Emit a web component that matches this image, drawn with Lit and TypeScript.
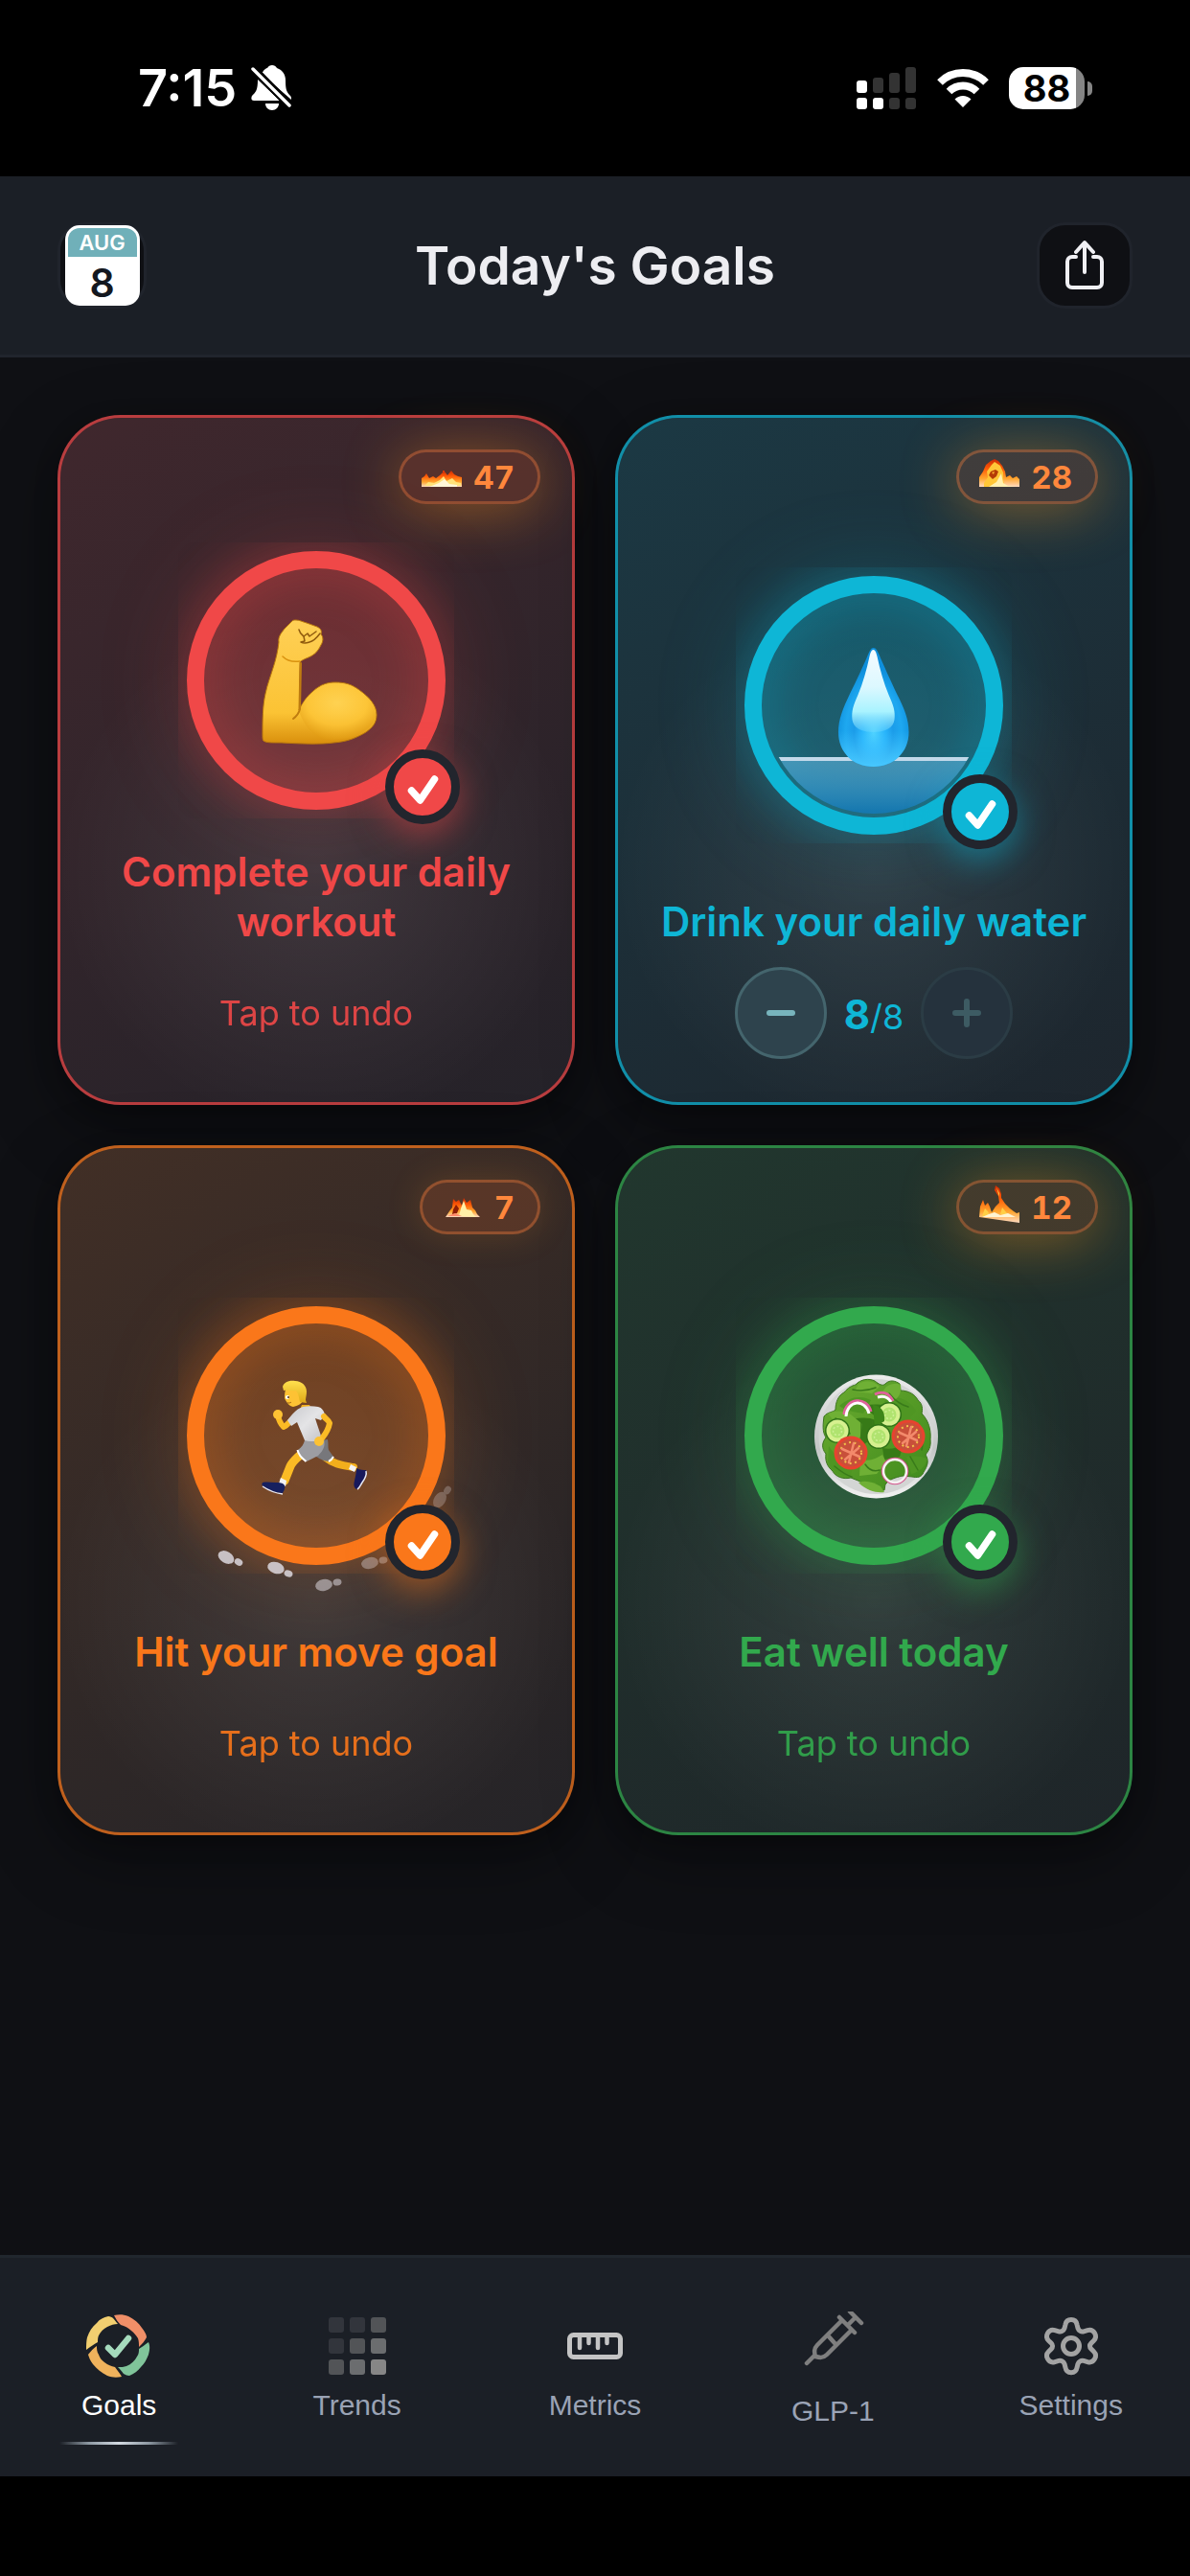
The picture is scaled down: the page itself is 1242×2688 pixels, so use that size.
import { LitElement, html, svg, css } from "lit";
import { customElement, property } from "lit/decorators.js";
import { classMap } from "lit/directives/class-map.js";

/* ---------- Artwork: every piece is drawn on the 288 x 288 ring square ---------- */

const armArt = svg`
  <defs>
    <linearGradient id="armSkin" x1="0" y1="0" x2="0" y2="1">
      <stop offset="0" stop-color="#ffd056"/><stop offset=".75" stop-color="#fbc334"/><stop offset="1" stop-color="#d98f0c"/>
    </linearGradient>
    <radialGradient id="armBicep" cx=".5" cy=".35" r=".65">
      <stop offset="0" stop-color="#ffd558"/><stop offset=".6" stop-color="#fdc537"/><stop offset="1" stop-color="#e09a12"/>
    </radialGradient>
  </defs>
  <path d="M123 81c4 0 7 2 11 3l11 4c4 2 5 4 4 8 3 3 2 8 0 11-3 6-6 10-13 13-5 2-7 3-9 5l-1 50c4-8 8-14 15-20 8-7 15-9 23-9 10 0 17 2 25 8 11 8 18 16 18 26 0 8-4 13-11 18-10 6-20 10-34 11-15 2-35 1-54 0-12 0-16 0-19-2-1-1-1-4-1-6 0-15 0-30 3-43 2-10 5-17 8-27 3-9 5-18 6-27-1-5 2-9 6-14l8-8c1-1 2-1 4-1z" fill="url(#armSkin)" stroke="#b9770d" stroke-width="1"/>
  <path d="M126 176c4-9 9-16 16-21 7-6 14-8 22-8 10 0 17 2 25 8 11 8 17 16 17 25 0 7-4 12-11 16-9 6-18 9-32 10-13 1-28-5-37-30z" fill="url(#armBicep)" opacity=".8"/>
  <path d="M128 126l-1 48c-1 4-3 7-7 10" fill="none" stroke="#c07d10" stroke-width="2" stroke-linecap="round"/>
  <path d="M126 91c1 4 3 5 5 7l4-3 2 3 7-5M131 98l1 5-4 1c4 2 6 1 9 0 5-1 8-5 11-9" fill="none" stroke="#8f5a0d" stroke-width="1.500" stroke-linecap="round" stroke-linejoin="round"/>
  <path d="M109 119c5 5 11 6 18 5" fill="none" stroke="#d9920f" stroke-width="1.500" stroke-linecap="round"/>
`;

const waterArt = svg`
  <defs>
    <clipPath id="waterBowl"><circle cx="144" cy="144" r="113"/></clipPath>
    <linearGradient id="waterFill" x1="0" y1="0" x2="0" y2="1">
      <stop offset="0" stop-color="#5fb4dc" stop-opacity=".6"/><stop offset=".85" stop-color="#1679b2" stop-opacity=".95"/>
    </linearGradient>
    <radialGradient id="dropBody" cx=".5" cy=".72" r=".55">
      <stop offset="0" stop-color="#4fd3ff"/><stop offset=".3" stop-color="#28b4fb"/><stop offset=".5" stop-color="#1b9ce9"/><stop offset=".72" stop-color="#1ea8f0"/><stop offset="1" stop-color="#0e8fdc"/>
    </radialGradient>
    <linearGradient id="dropShine" x1="0" y1="0" x2="0" y2="1">
      <stop offset="0" stop-color="#f4fbff"/><stop offset=".45" stop-color="#dcf8ff"/><stop offset=".75" stop-color="#a9f3ff"/><stop offset="1" stop-color="#8be4ff" stop-opacity=".25"/>
    </linearGradient>
    <linearGradient id="dropBase" x1="0" y1="0" x2="0" y2="1">
      <stop offset=".7" stop-color="#48c8ff" stop-opacity="0"/><stop offset="1" stop-color="#48c8ff"/>
    </linearGradient>
  </defs>
  <g clip-path="url(#waterBowl)">
    <rect x="24" y="198" width="240" height="66" fill="url(#waterFill)"/>
    <rect x="24" y="198" width="240" height="4" fill="#c3d9ea"/>
  </g>
  <path d="M143.500 84c3 0 4 3 6 7 5 12 12 27 19 42 7 14 12 25 12 39 0 21-16 36-37 36s-36.500-15-36.500-36c0-14 5-25 12-40 7-14 14-29 19-41 2-4 3-7 5.500-7z" fill="url(#dropBody)"/>
  <path d="M143.500 84c3 0 4 3 6 7 5 12 12 27 19 42 7 14 12 25 12 39 0 21-16 36-37 36s-36.500-15-36.500-36c0-14 5-25 12-40 7-14 14-29 19-41 2-4 3-7 5.500-7z" fill="url(#dropBase)"/>
  <path d="M143.500 86c2 0 3 3 4 7 3 14 7 28 12 40 5 11 7 17 6 26-1 8-9 13-22 13s-21-5-22-13c-1-9 1-15 6-26 5-12 9-26 12-40 1-4 2-7 4-7z" fill="url(#dropShine)"/>
`;

const prints = [
  { x: 50, y: 271, hx: 63, hy: 276, r: 30, o: 0.85 },
  { x: 102, y: 282, hx: 115, hy: 288, r: 18, o: 0.85 },
  { x: 152, y: 300, hx: 166, hy: 297, r: -10, o: 0.55 },
  { x: 200, y: 277, hx: 214, hy: 274, r: -12, o: 0.4 },
  { x: 273, y: 211, hx: 281, hy: 201, r: -58, o: 0.28 },
];

const runnerArt = svg`
  <defs>
    <linearGradient id="runShirt" x1="0" y1="0" x2="1" y2="1">
      <stop offset="0" stop-color="#c9c9cd"/><stop offset=".5" stop-color="#e4e4e6"/><stop offset="1" stop-color="#c2c2c6"/>
    </linearGradient>
    <linearGradient id="runHair" x1="0" y1="0" x2="0" y2="1">
      <stop offset="0" stop-color="#ffe04e"/><stop offset="1" stop-color="#e0a917"/>
    </linearGradient>
  </defs>
  ${prints.map(
    (p) => svg`<g fill="#dcd8de" opacity=${p.o}>
      <ellipse cx=${p.x} cy=${p.y} rx="9" ry="6" transform="rotate(${p.r} ${p.x} ${p.y})"/>
      <ellipse cx=${p.hx} cy=${p.hy} rx="4.500" ry="3.500" transform="rotate(${p.r} ${p.hx} ${p.hy})"/></g>`
  )}
  <path d="M154 167c8 7 18 8 29 10" fill="none" stroke="#f2ae1c" stroke-width="8" stroke-linecap="round"/>
  <path d="M180 174l6 3-2 5-6-3z" fill="#f3f3f5"/>
  <path d="M186 178c4 2 7 2 10 2 2 3 0 8-3 12-2 4-4 7-7 8-3-2-3-5-2-9 1-5 2-8 2-13z" fill="#17195c"/>
  <path d="M196 181c1 4-1 8-4 12-2 3-3 6-5 7" fill="none" stroke="#e8e8f2" stroke-width="1.500"/>
  <path d="M130 162c-6 5-11 9-13 14-2 5-4 10-6 15" fill="none" stroke="#fbbb25" stroke-width="9" stroke-linecap="round"/>
  <path d="M107 188l6 3-1 6-7-3z" fill="#f3f3f5"/>
  <path d="M88 193c5-1 9 0 14 0 4 0 7 0 9 3 1 3-1 6-2 8-7 0-14-3-19-6-3-2-3-3-2-5z" fill="#17205f"/>
  <path d="M88 197c6 4 13 7 21 8" fill="none" stroke="#e8e8f2" stroke-width="1.500"/>
  <path d="M144 150l12-2c1 5 0 8 1 11l5 7c-1 3-3 5-5 5-5 0-9-3-13-5z" fill="#77777b"/>
  <path d="M132 149l20-1c2 7-1 12-6 17l-12 6c-4-3-8-7-9-12 4-3 6-6 7-10z" fill="#9d9da2"/>
  <path d="M124.500 159c1 5 5 9 9 12M157 171c2-1 4-3 5-5" fill="none" stroke="#fff" stroke-width="2"/>
  <path d="M129 112h8l2 4-7 3-5-2z" fill="#f2ae1c"/>
  <path d="M118 128c-3 3-5 6-8 7-3-3-5-7-6-12" fill="none" stroke="#fbbb25" stroke-width="6" stroke-linecap="round" stroke-linejoin="round"/>
  <circle cx="104" cy="122" r="5" fill="#fdc234"/>
  <path d="M130 114c5-1 11-1 16 0 4 1 6 4 7 8l-4 6-6-2c2 7 5 14 7 22-5 2-12 3-18 1l-8-19-6 4-4-6c5-6 8-11 16-14z" fill="url(#runShirt)"/>
  <path d="M152 124c2 3 5 4 6 7-1 6-4 11-8 16" fill="none" stroke="#fbbb25" stroke-width="6" stroke-linecap="round" stroke-linejoin="round"/>
  <circle cx="147" cy="150" r="5" fill="#fdc234"/>
  <path d="M112 96c-1 4-1 7-1 9 2 4 4 8 9 9 5-1 8-3 11-7v-12z" fill="#fdc234"/>
  <path d="M109 93c1-4 6-7 13-6 7 0 12 5 12 11 0 4-1 6-1 9l1 3-7-1c-1-4-1-8-4-12-4 1-9-1-13 0z" fill="url(#runHair)"/>
  <circle cx="114" cy="104" r="2" fill="#fff"/><circle cx="115" cy="104" r="1" fill="#4a2b10"/>
  <path d="M114 110c2 0 3 0 4-1" stroke="#9d5d10" stroke-width="1" fill="none"/>
`;

const tomato = (x: number, y: number) => svg`
  <circle cx=${x} cy=${y} r="17.500" fill="#e8432f"/>
  <circle cx=${x} cy=${y} r="14.500" fill="#c8503a"/>
  <circle cx=${x} cy=${y} r="11" fill="none" stroke="#f2c34a" stroke-width="2" stroke-dasharray="2 3.500"/>
  <g stroke="#f38a6b" stroke-width="2.500" stroke-linecap="round">
    <path d="M${x - 9} ${y - 4}L${x + 9} ${y + 4}M${x + 3} ${y - 10}L${x - 2} ${y + 10}M${x - 6} ${y + 7}L${x + 8} ${y - 5}"/>
  </g>`;

const cucumber = (x: number, y: number) => svg`
  <circle cx=${x} cy=${y} r="13" fill="#2f7317"/>
  <circle cx=${x} cy=${y} r="11.500" fill="#d6f08f"/>
  <circle cx=${x} cy=${y} r="7.500" fill="#b0e36f"/>
  <circle cx=${x} cy=${y} r="4.500" fill="none" stroke="#cdf096" stroke-width="1.500" stroke-dasharray="2 2"/>`;

const saladArt = svg`
  <defs>
    <linearGradient id="plate" x1="0" y1="0" x2="0" y2="1"><stop offset="0" stop-color="#ececec"/><stop offset=".6" stop-color="#c4c6c6"/><stop offset="1" stop-color="#f2f2f2"/></linearGradient>
    <linearGradient id="leaf" x1="0" y1="0" x2="1" y2="1"><stop offset="0" stop-color="#6bab30"/><stop offset="1" stop-color="#3f8a1c"/></linearGradient>
  </defs>
  <circle cx="146.500" cy="145" r="64.500" fill="url(#plate)"/>
  <circle cx="146.500" cy="145" r="60" fill="#d3d5d4"/>
  <path d="M125 91c5-6 14-7 20-4 4 3 8 6 11 3 5-5 11-3 15 0l1 7c8 0 15 4 18 10 5 4 5 9 4 14 7 7 10 17 9 27 1 8-2 12-5 16 4 6 2 12-2 18-2 6-7 6-12 5l-10-1c-8 2-13 3-18 9l-1 6c-9 1-18-3-25-9l-10-4c-8 2-16-1-19-7-6-5-8-11-7-18-5-6-4-12 0-17-4-6-3-14-2-22 4-5 9-4 12-7 0-8 3-15 9-18 4-5 8-7 12-8z" fill="url(#leaf)" stroke="#3b7420" stroke-width="1"/>
  <g fill="#4f9623">
    <path d="M108 113c10-9 22-12 33-6l-8 14c-9-2-17-2-25-8z"/>
    <path d="M155 108c12-8 25-2 33 10l-10 12c-10-4-19-11-23-22z"/>
    <path d="M97 155c6 10 14 15 26 20l-4 12c-12 0-20-7-23-16z"/>
    <path d="M178 166c8-1 15-1 22 2-2 8-8 14-17 16z"/>
  </g>
  <g fill="#377a17">
    <path d="M112 130c10-4 24-7 34-2l-3 18-10 8c-8-6-17-13-21-24z"/>
    <path d="M134 112c12-1 25-1 32 4l-12 12c-8-3-16-9-20-16z"/>
    <path d="M153 157c8 2 15 0 22-4l-4 13-16 3z"/>
  </g>
  <g fill="#6fb035">
    <path d="M96 121c9-4 17-3 24 1l12 10-3 18c-8 2-14-2-16-9-5-7-11-12-17-20z"/>
    <path d="M128 90c8-5 17-3 22 3l-8 7-18-2z"/>
    <path d="M157 93c6-4 11-4 15-2 1 7-1 13-8 17l-14-6z"/>
    <path d="M130 168c8 4 16 0 23-4l4 8-10 12-18 2z"/>
    <path d="M128 193c8-3 16 0 23 4l4 6c-8 1-18-1-27-10z"/>
  </g>
  <g fill="none" stroke="#397b1a" stroke-width="1.500" stroke-linecap="round">
    <path d="M104 126c7 3 12 8 15 16M131 130v20M142 128l4 20M160 100c4 5 12 12 20 14M135 174c4 6 9 8 15 6M190 134c5 8 6 16 4 25M122 96c8 2 16 1 24-2M103 176c6 5 11 9 18 11M182 166l8 14"/>
  </g>
  <path d="M113 122c1-17 24-20 28-3" fill="none" stroke="#e0629c" stroke-width="3"/>
  <path d="M115 124c1-17 20-19 24-3" fill="none" stroke="#fff" stroke-width="3"/>
  <path d="M145 101c8-4 15-1 19 7" fill="none" stroke="#e0629c" stroke-width="3"/>
  <path d="M148 104c6-2 11 0 14 5" fill="none" stroke="#fff" stroke-width="3"/>
  ${cucumber(106, 139)} ${cucumber(160, 122)}
  <path d="M143 112c8 1 13 6 12 17l-10 6z" fill="#3d8619"/>
  ${cucumber(149, 145)} ${tomato(180, 145)} ${tomato(120, 162)}
  <circle cx="166" cy="181" r="13" fill="none" stroke="#d3548c" stroke-width="2.500"/>
  <circle cx="166" cy="181" r="12" fill="none" stroke="#f6f1f2" stroke-width="2.500"/>
`;

const flameGradient = svg`<defs><linearGradient id="fire" x1="0" y1="0" x2="0" y2="1">
  <stop offset="0" stop-color="#c92a05"/><stop offset=".35" stop-color="#ff5a06"/><stop offset=".7" stop-color="#ffa62e"/><stop offset="1" stop-color="#ffd9c0"/></linearGradient></defs>`;

const flames: Record<string, unknown> = {
  low: svg`<path d="M0 34V25l3-2 2-3 3 5 4-2 3 2 4-3 3-3 2-1 3 4 4-5 3 4 4 2 4 1v10z" fill="url(#fire)"/>
    <path d="M3 33l4-4 6 1 6-3 4-4 3 5 6-3 4 4 5 1v3z" fill="#ffe27a"/><path d="M8 34l10-4 6-4 5 5 8 1v2z" fill="#fff6d8"/><rect x="22" y="17" width="2" height="3" fill="#d8380a"/>`,
  curl: svg`<path d="M0 34V24l4-6 3-7 5-4 4-2 4 2 4 5 3 6 1 6 4-2 3 3 4-2 3 3v8z" fill="url(#fire)"/>
    <path d="M5 30l4-6-1-6 5-7 3-3 6 4 3 7v8l2 7H5z" fill="#ffc637"/><path d="M10 22l2-4 5-2 3 2-2 5-4 3z" fill="#b53a06"/><path d="M13 19l3-1-1 3z" fill="#ffb02e"/><path d="M10 34l8-5 5-9 2 10 5 3 8 1z" fill="#fff0b0"/>`,
  twin: svg`<path d="M3 34l4-6 3-4 1-9 3 3 3-2 3 6 2-8 3 5 4-3 2 8 3 3 2 4 3 3z" fill="url(#fire)"/>
    <path d="M17 33l2-8 3-8 3 9 5 1 2 4 3 3z" fill="#fff0a8"/><path d="M11 26l3-5 3 4-2 5-5 1z" fill="#8f1d05"/><path d="M5 33l8-3 7 3z" fill="#ff8a6a"/>`,
  tall: svg`<path d="M0 34l1-11 3-7 2 6 3-3 2 4 2 6 4-6 4-4-1-7-4-6 1-5 4 3 2 6v4l4 6 5 5 4 3 3 2 3-1v11z" fill="url(#fire)"/>
    <path d="M18 3l3 6v4zM3 33l3-8 3 3 3 6zM22 31l2-7 5 6 8 4z" fill="#ffcf46"/><path d="M3 34l7-3 6-2 6 3 8-2 8 4z" fill="#fff4d2"/>`,
};

interface Goal {
  tone: string;
  title: string;
  streak: number;
  flame: string;
  hot: boolean;
  art: unknown;
  count?: number;
  total?: number;
}

const goals: Goal[] = [
  { tone: "red", title: "Complete your daily workout", streak: 47, flame: "low", hot: true, art: armArt },
  { tone: "cyan", title: "Drink your daily water", streak: 28, flame: "curl", hot: true, art: waterArt, count: 8, total: 8 },
  { tone: "orange", title: "Hit your move goal", streak: 7, flame: "twin", hot: false, art: runnerArt },
  { tone: "green", title: "Eat well today", streak: 12, flame: "tall", hot: true, art: saladArt },
];

@customElement("goal-card")
export class GoalCard extends LitElement {
  @property({ attribute: false }) goal!: Goal;

  static styles = css`
    :host { display: block; font-family: Inter, "Liberation Sans", sans-serif; }
    .card {
      box-sizing: border-box; position: relative; aspect-ratio: 3 / 4; height: 100%; width: 100%;
      display: flex; flex-direction: column; align-items: center;
      padding: 99px 30px 45px; border: 3px solid rgb(var(--tone) / .74); border-radius: 66px;
      background:
        radial-gradient(circle at 50% 66%, rgb(255 255 255 / .09), transparent 50%) padding-box,
        linear-gradient(150deg, rgb(var(--tone) / .16), rgb(var(--tone) / .08) 60%, rgb(var(--tone) / .03)) padding-box,
        linear-gradient(#1e2128, #1e2128) border-box;
      box-shadow: 0 24px 72px rgb(0 0 0 / .35), 0 6px 24px rgb(0 0 0 / .2);
      color: rgb(var(--tone));
    }
    .red { --tone: 240 72 72; }
    .cyan { --tone: 14 182 214; }
    .orange { --tone: 250 119 26; }
    .green { --tone: 50 169 77; }
    .streak {
      position: absolute; top: 33px; right: 33px; box-sizing: border-box; height: 57px;
      display: flex; align-items: center; gap: 12px; padding: 0 24px 0 21px;
      border: 3px solid rgb(255 131 60 / .35); border-radius: 30px; background: rgb(255 110 50 / .16);
      color: #ff873c; font-size: 33px; line-height: 36px; font-weight: 700; font-variant-numeric: tabular-nums;
      box-shadow: 0 0 36px rgb(255 150 40 / .18);
    }
    .hot { box-shadow: 0 6px 60px rgb(255 150 30 / .44); }
    .flame { display: block; width: 42px; height: 48px; }
    .stage { flex: 1; display: flex; align-items: center; }
    .ring { position: relative; width: 288px; height: 288px; }
    .halo { position: absolute; inset: 9px; border-radius: 50%; box-shadow: 0 0 96px rgb(var(--tone) / .22); }
    .track, .art { position: absolute; inset: 0; width: 100%; height: 100%; }
    .art { overflow: visible; }
    .track { overflow: hidden; }
    .disc { fill: rgb(var(--tone) / .3); }
    .hoop { fill: none; stroke: rgb(var(--tone)); stroke-width: 18px; filter: drop-shadow(0 0 24px rgb(var(--tone) / .5)); }
    .done {
      position: absolute; right: -6px; bottom: -6px; box-sizing: border-box; width: 78px; height: 78px;
      border: 9px solid #22252d; border-radius: 50%; background: rgb(var(--tone));
      box-shadow: 0 12px 36px rgb(var(--tone) / .5);
    }
    .tick { display: block; width: 60px; height: 60px; }
    .title { margin: 0 0 21px; font-size: 42px; line-height: 52px; font-weight: 600; text-align: center; }
    .action { height: 96px; display: flex; align-items: center; gap: 18px; }
    .undo {
      border: 0; padding: 12px; background: none; color: rgb(var(--tone)); opacity: .9;
      font-family: inherit; font-size: 36px; line-height: 45px; cursor: pointer;
    }
    .step {
      box-sizing: border-box; width: 96px; height: 96px; padding: 0; border: 3px solid #44656d; border-radius: 50%;
      background: #2e434d; color: #78b4bc; cursor: pointer;
    }
    .step:disabled { border-color: #2b3c45; background: #25323d; color: #3d5b63; cursor: default; }
    .sign { display: block; margin: auto; width: 36px; height: 36px; }
    .count { font-size: 36px; line-height: 48px; padding-top: 6px; }
    .now { font-size: 42px; font-weight: 700; }
  `;

  render() {
    const g = this.goal;
    return html`
      <article class=${classMap({ card: true, [g.tone]: true })}>
        <div class=${classMap({ streak: true, hot: g.hot })}>
          <svg class="flame" viewBox="0 0 42 48" aria-hidden="true">${flameGradient}${flames[g.flame]}</svg>
          <span>${g.streak}</span>
        </div>
        <div class="stage">
          <div class="ring">
            <div class="halo"></div>
            <svg class="track" viewBox="0 0 288 288" aria-hidden="true">
              <circle class="disc" cx="144" cy="144" r="126"/><circle class="hoop" cx="144" cy="144" r="126"/>
            </svg>
            <svg class="art" viewBox="0 0 288 288" aria-hidden="true">${g.art}</svg>
            <div class="done">
              <svg class="tick" viewBox="0 0 60 60" fill="none" stroke="#fff" stroke-width="7.500" stroke-linecap="round" stroke-linejoin="round" aria-hidden="true"><path d="M18.500 34l9 10L42.500 22"/></svg>
            </div>
          </div>
        </div>
        <h2 class="title">${g.title}</h2>
        <div class="action">
          ${g.total
            ? html`
                <button class="step" aria-label="Remove one glass">
                  <svg class="sign" viewBox="0 0 36 36" stroke="currentColor" stroke-width="6" stroke-linecap="round"><path d="M6 18h24"/></svg>
                </button>
                <span class="count"><span class="now">${g.count}</span>/${g.total}</span>
                <button class="step" aria-label="Add one glass" ?disabled=${g.count === g.total}>
                  <svg class="sign" viewBox="0 0 36 36" stroke="currentColor" stroke-width="6" stroke-linecap="round"><path d="M6 18h24M18 6v24"/></svg>
                </button>`
            : html`<button class="undo">Tap to undo</button>`}
        </div>
      </article>`;
  }
}

/* ---------- Tab bar icons, each on a 72 x 72 square ---------- */

const heat = ["#32353c", "#32353c", "#525457", "#32353c", "#525457", "#6b6d6f", "#525457", "#6b6d6f", "#868686"];

const tabs = [
  {
    label: "Goals",
    icon: svg`
      <path d="M31 4C36 3 41 3 46 5C52 8 57 12 60 17C63 21 65 24 65 27C63 31 60 34 57 37C57 34 57 31 56 28C54 25 52 22 49 20C46 17 42 15 38 14C35 11 33 8 31 4Z" fill="#f08f68"/>
      <path d="M67 32C69 37 68 41 67 45C65 50 63 54 59 58C56 62 52 65 47 67C45 67 43 66 41 65C39 62 37 60 35 58C39 58 41 58 44 57C49 55 53 51 55 47C57 44 57 42 57 39C60 37 63 35 67 32Z" fill="#80c49a"/>
      <path d="M39 68C34 69 29 69 24 67C18 64 13 60 9 55C6 51 5 48 4 45C7 41 10 38 13 36C13 39 13 42 15 45C16 48 18 51 21 53C25 56 28 57 32 58C34 61 37 64 39 68Z" fill="#efb25c"/>
      <path d="M2 40C2 35 2 31 3 27C5 21 8 16 13 12C16 8 20 6 25 5C27 5 29 6 30 7C32 9 33 11 35 13C31 13 28 14 24 16C20 18 17 21 15 25C14 27 14 30 14 32C10 34 6 37 2 40Z" fill="#f2cf70"/>
      <path d="M25 38l7 7L46 28" fill="none" stroke="#a5dbbd" stroke-width="6.500" stroke-linecap="round" stroke-linejoin="round"/>`,
  },
  {
    label: "Trends",
    icon: svg`${heat.map((c, i) => svg`<rect x=${6 + (i % 3) * 22} y=${6 + Math.floor(i / 3) * 22} width="16" height="16" rx="3" fill=${c}/>`)}`,
  },
  {
    label: "Metrics",
    icon: svg`<g fill="none" stroke="#c4c4c4" stroke-width="5" stroke-linecap="round"><rect x="9.500" y="24.500" width="53" height="23" rx="4"/>
      <path d="M20 25v13M29.500 25v8M39 25v13M48.500 25v8" stroke-width="4.500"/></g>`,
  },
  {
    label: "GLP-1",
    tall: true,
    icon: svg`<g fill="none" stroke="#7f7f7f" stroke-width="4.500" stroke-linecap="round" stroke-linejoin="round" transform="translate(0 -9)">
      <path d="M9 63l8-8M43 15l16 16M54 9l12 12M60 15l-8 8M46 18L20 44c-4 4-3 8-2 12 4 1 8 2 12-2l26-26M31 34l8 9"/></g>`,
  },
  {
    label: "Settings",
    icon: svg`<g fill="none" stroke="#a3a3a3" stroke-width="5" stroke-linejoin="round"><circle cx="36" cy="36" r="8.500"/>
      <path d="M36 8.500c3.500 0 5.500 2 6 5l1 4c.8 2.500 3.500 4 6 3.300l4-1.200c3-.9 5.800.1 7.500 3s1.200 5.700-1 7.900l-2.700 2.600c-1.800 1.800-1.800 4.200 0 6l2.700 2.600c2.200 2.200 2.700 5 1 7.900s-4.500 3.900-7.500 3l-4-1.200c-2.500-.7-5.200.8-6 3.300l-1 4c-.5 3-2.500 5-6 5s-5.500-2-6-5l-1-4c-.8-2.500-3.500-4-6-3.300l-4 1.200c-3 .9-5.800-.1-7.500-3s-1.200-5.700 1-7.900l2.700-2.600c1.800-1.800 1.800-4.200 0-6l-2.700-2.600c-2.200-2.200-2.700-5-1-7.900s4.500-3.900 7.500-3l4 1.200c2.500.7 5.200-.8 6-3.300l1-4c.5-3 2.500-5 6-5z"/></g>`,
  },
];

@customElement("app-root")
export class AppRoot extends LitElement {
  static styles = css`
    :host {
      display: flex; flex-direction: column; min-height: 100vh; background: #0f1014; color: #ededf1;
      font-family: Inter, "Liberation Sans", sans-serif;
    }
    .status {
      height: 184px; box-sizing: border-box; padding: 0 102px 0 144px; background: #000; color: #fff;
      display: flex; align-items: center; justify-content: space-between;
    }
    .cluster { display: flex; align-items: center; gap: 21px; }
    .clock { gap: 15px; }
    .time { font-size: 54px; line-height: 60px; font-weight: 600; }
    .bell { width: 42px; height: 48px; }
    .signal { width: 63px; height: 45px; }
    .wifi { width: 54px; height: 42px; }
    .battery { display: flex; align-items: center; gap: 3px; }
    .cell {
      width: 79px; height: 44px; border-radius: 15px; background: linear-gradient(90deg, #fff 88%, #858585 88%);
      color: #000; font-size: 38px; line-height: 44px; font-weight: 700; text-align: center;
    }
    .tip { width: 5px; height: 15px; border-radius: 0 6px 6px 0; background: #858585; }

    .bar {
      display: grid; grid-template-columns: 1fr auto 1fr; align-items: center; padding: 48px 60px;
      background: #1b1f26; border-bottom: 3px solid #21252d;
    }
    .heading { margin: 0; font-size: 55px; line-height: 72px; font-weight: 600; }
    .date, .share {
      box-sizing: border-box; height: 90px; padding: 0; border: 3px solid #20242c; border-radius: 30px;
      background: #0f1014; color: #f0f0f4; display: flex; align-items: center; justify-content: center; cursor: pointer;
    }
    .date { width: 93px; }
    .share { width: 100px; justify-self: end; }
    .leaf {
      box-sizing: border-box; width: 78px; height: 84px; border: 3px solid #fff; border-radius: 15px; overflow: hidden;
      background: #fff; display: flex; flex-direction: column;
    }
    .month { background: #70b0b9; color: #fff; font-family: Inter, sans-serif; font-size: 22px; line-height: 30px; font-weight: 600; }
    .day { color: #14181f; font-family: Inter, sans-serif; font-size: 41px; line-height: 54px; font-weight: 600; }
    .export { width: 48px; height: 54px; }

    .goals {
      flex: 1; display: grid; grid-template-columns: 1fr 1fr; gap: 42px; align-content: start; padding: 60px;
    }
    .tabs {
      display: grid; grid-template-columns: repeat(5, 1fr); height: 228px;
      background: #1b1f26; border-top: 3px solid #21272e;
    }
    .tab {
      display: flex; flex-direction: column; align-items: center; justify-content: center; gap: 8px;
      color: #9aa3b5; text-decoration: none; font-family: "Liberation Sans", Arial, sans-serif; font-size: 30px; line-height: 36px;
      position: relative;
    }
    .icon { display: block; width: 72px; height: 72px; }
    .tall { padding: 6px 0; }
    .active { color: #fff; }
    .active::after {
      content: ""; position: absolute; bottom: 33px; left: 25%; right: 25%; height: 3px;
      background: linear-gradient(90deg, transparent, #8e99a3 25%, #d3dae2 50%, #8e99a3 75%, transparent);
    }
    .home { height: 104px; background: #000; }
  `;

  render() {
    return html`
      <div class="status">
        <div class="cluster clock">
          <span class="time">7:15</span>
          <svg class="bell" viewBox="0 0 42 48" aria-label="Silent">
            <path d="M11 9C13 5 16 3 17 3c1-2 3-3 5-3s4 1 5 3c6 2 9 7 9 13 0 9 1 12 5 16 1 1 1 2 1 4zM7 15l23 22H3c-3 0-3-3-2-5 4-4 6-6 6-17zM15 40h14c0 4-3 7-7 7s-7-3-7-7z" fill="#fff"/>
            <path d="M2 3l39 40" stroke="#000" stroke-width="8"/><path d="M2 4l38 38" stroke="#fff" stroke-width="3.500" stroke-linecap="round"/>
          </svg>
        </div>
        <div class="cluster">
          <svg class="signal" viewBox="0 0 63 45" aria-label="Signal">
            <g fill="#fff"><rect x="0" y="14" width="11" height="13" rx="3"/><rect x="0" y="32" width="11" height="12" rx="3"/><rect x="17" y="32" width="11" height="12" rx="3"/></g>
            <g fill="#333"><rect x="17" y="11" width="11" height="16" rx="3"/><rect x="34" y="6" width="11" height="21" rx="3"/><rect x="51" y="0" width="11" height="27" rx="3"/><rect x="34" y="32" width="11" height="12" rx="3"/><rect x="51" y="32" width="11" height="12" rx="3"/></g>
          </svg>
          <svg class="wifi" viewBox="0 0 54 42" aria-label="Wi-Fi">
            <g fill="none" stroke="#fff" stroke-width="8"><path d="M3 15a34 34 0 0 1 48 0"/><path d="M12.500 24.500a20.500 20.500 0 0 1 29 0"/></g>
            <path d="M27 41l-8.500-8.500a12 12 0 0 1 17 0z" fill="#fff"/>
          </svg>
          <div class="battery"><div class="cell">88</div><div class="tip"></div></div>
        </div>
      </div>
      <header class="bar">
        <button class="date" aria-label="Choose a date"><span class="leaf"><span class="month">AUG</span><span class="day">8</span></span></button>
        <h1 class="heading">Today's Goals</h1>
        <button class="share" aria-label="Share">
          <svg class="export" viewBox="0 0 48 54" fill="none" stroke="currentColor" stroke-width="4" stroke-linecap="round" stroke-linejoin="round"><path d="M15 18h-4c-3 0-5 2-5 5v22c0 3 2 5 5 5h26c3 0 5-2 5-5V23c0-3-2-5-5-5h-4M24 34V4M15 13l9-10 9 10"/></svg>
        </button>
      </header>
      <main class="goals">${goals.map((g) => html`<goal-card .goal=${g}></goal-card>`)}</main>
      <nav class="tabs">
        ${tabs.map(
          (t, i) => html`<a class=${classMap({ tab: true, active: i === 0 })} href="#${t.label.toLowerCase()}">
            <svg class=${classMap({ icon: true, tall: !!t.tall })} viewBox="0 0 72 72" aria-hidden="true">${t.icon}</svg>
            <span>${t.label}</span>
          </a>`
        )}
      </nav>
      <div class="home"></div>
    `;
  }
}
